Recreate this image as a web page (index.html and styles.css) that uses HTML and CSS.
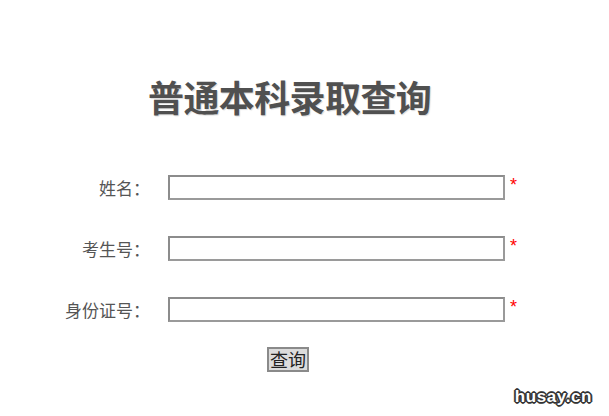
FILE: index.html
```html
<!DOCTYPE html>
<html lang="zh-CN">
<head>
<meta charset="utf-8">
<title>普通本科录取查询</title>
<link rel="stylesheet" href="styles.css">
</head>
<body>
<div class="page">
  <h1 class="title">普通本科录取查询</h1>
  <form class="form">
    <label class="label" for="name">姓名：</label>
    <input class="field" id="name" type="text">
    <span class="req">*</span>

    <label class="label" for="ksh">考生号：</label>
    <input class="field" id="ksh" type="text">
    <span class="req">*</span>

    <label class="label" for="sfz">身份证号：</label>
    <input class="field" id="sfz" type="text">
    <span class="req">*</span>

    <div class="actions">
      <button class="btn" type="button">查询</button>
    </div>
  </form>
</div>
<div class="watermark">husay.cn</div>
</body>
</html>
```

FILE: styles.css
```css
html, body {
  margin: 0;
  padding: 0;
  background: #fff;
}
body {
  width: 609px;
  height: 416px;
  position: relative;
  overflow: hidden;
  font-family: "Noto Sans CJK SC", "Noto Sans", sans-serif;
  color: #555;
}
.page {
  padding-top: 70px;
}
.title {
  margin: 0;
  padding-left: 148px;
  font-size: 36px;
  line-height: 52px;
  font-weight: bold;
  color: #505050;
  letter-spacing: -0.6px;
  text-shadow: 1px 1px 1px rgba(0,0,0,0.15);
}
.form {
  margin-top: 53px;
  display: grid;
  grid-template-columns: 150px 336px auto;
  column-gap: 0;
  row-gap: 36px;
  align-items: center;
}
.label {
  grid-column: 1;
  text-align: right;
  font-size: 17px;
  line-height: 25px;
  color: #555;
}
.field {
  grid-column: 2;
  margin: 0 0 0 18px;
  width: 337px;
  height: 25px;
  box-sizing: border-box;
  border: 2px solid #8c8c8c;
  border-right-color: #9a9a9a;
  border-bottom-color: #9a9a9a;
  background: #fff;
  padding: 0 3px;
  font-size: 14px;
  outline: none;
}
.req {
  grid-column: 3;
  margin-left: 24px;
  align-self: start;
  margin-top: 1px;
  font-size: 18px;
  line-height: 18px;
  color: #f00;
  font-family: "Liberation Sans", sans-serif;
}
.actions {
  grid-column: 1 / -1;
  margin-top: -11px;
  padding-left: 267px;
}
.btn {
  margin: 0;
  width: 42px;
  height: 25px;
  padding: 0;
  box-sizing: border-box;
  border: 2px solid #8a8a8a;
  background: #dcdcdc;
  font-family: "Noto Sans CJK SC", sans-serif;
  font-size: 18px;
  line-height: 19px;
  color: #222;
  border-radius: 0;
}
.watermark {
  position: absolute;
  right: 17px;
  bottom: 9px;
  font-family: "Liberation Sans", "DejaVu Sans", sans-serif;
  font-weight: bold;
  font-size: 17px;
  letter-spacing: 0.6px;
  color: #fff;
  text-shadow:
    1px 0 0 #333, -1px 0 0 #333, 0 1px 0 #333, 0 -1px 0 #333,
    1px 1px 0 #333, -1px -1px 0 #333, 1px -1px 0 #333, -1px 1px 0 #333,
    2px 0 0 #555, -2px 0 0 #555, 0 2px 0 #555, 0 -2px 0 #555;
}
```
